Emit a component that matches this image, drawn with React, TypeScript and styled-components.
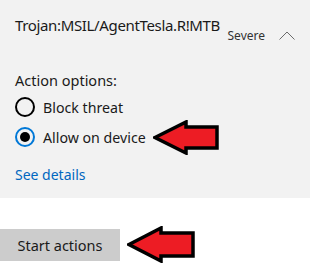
import React from "react";
import styled, { createGlobalStyle } from "styled-components";

const Global = createGlobalStyle`
  html, body { margin: 0; padding: 0; background: #ffffff; }
  body { font-family: "Noto Sans", "Open Sans", sans-serif; color: #000; }
`;

const Page = styled.div`
  width: 310px;
  height: 269px;
  display: flex;
  flex-direction: column;
  background: #ffffff;
  overflow: hidden;
`;

const Panel = styled.section`
  height: 198px;
  box-sizing: border-box;
  background: #f2f2f2;
  padding: 14px 15px 0 15px;
  display: flex;
  flex-direction: column;
`;

const Header = styled.div`
  display: flex;
  align-items: flex-start;
  height: 44px;
`;

const Title = styled.div`
  font-size: 15px;
  line-height: 22px;
  color: #1a1a1a;
  letter-spacing: -0.35px;
`;

const Severity = styled.div`
  margin-left: auto;
  margin-top: 12px;
  font-size: 12px;
  line-height: 20px;
  color: #333;
`;

const Chevron = styled.svg`
  margin-left: 14px;
  margin-top: 17px;
  flex: none;
`;

const Label = styled.div`
  font-size: 14.5px;
  line-height: 20px;
  color: #1a1a1a;
  margin-top: 12px;
`;

const Options = styled.div`
  display: flex;
  flex-direction: column;
  gap: 10px;
  margin-top: 7px;
`;

const Option = styled.label`
  display: flex;
  align-items: center;
  height: 20px;
  font-size: 14.2px;
  color: #1a1a1a;
`;

const Radio = styled.span<{ $checked?: boolean }>`
  width: 20px;
  height: 20px;
  box-sizing: border-box;
  border-radius: 50%;
  border: 2px solid ${(p) => (p.$checked ? "#0078d7" : "#000")};
  display: flex;
  align-items: center;
  justify-content: center;
  margin-right: 8px;
  flex: none;
  &::after {
    content: "";
    width: 10px;
    height: 10px;
    border-radius: 50%;
    background: #000;
    display: ${(p) => (p.$checked ? "block" : "none")};
  }
`;

const Link = styled.a`
  margin-top: 18px;
  font-size: 14px;
  line-height: 20px;
  color: #0067c0;
  text-decoration: none;
`;

const ActionRow = styled.div`
  display: flex;
  align-items: center;
  margin-top: 28px;
`;

const Button = styled.button`
  width: 120px;
  height: 32px;
  border: none;
  background: #cccccc;
  font-family: inherit;
  font-size: 14.5px;
  color: #1a1a1a;
  padding: 0;
`;

const Arrow = styled.svg<{ $gap: number }>`
  margin-left: ${(p) => p.$gap}px;
  flex: none;
`;

const ArrowIcon = ({ w, h, gap }: { w: number; h: number; gap: number }) => {
  const head = Math.round(w * 0.52);
  const shT = Math.round(h * 0.2);
  const shB = h - shT;
  return (
    <Arrow $gap={gap} width={w} height={h} viewBox={`0 0 ${w} ${h}`}>
      <polygon
        points={`2,${h / 2} ${head - 1},2 ${head - 1},${shT} ${w - 2},${shT} ${w - 2},${shB} ${head - 1},${shB} ${head - 1},${h - 2}`}
        fill="#ed1c24"
        stroke="#000"
        strokeWidth={3.5}
        strokeLinejoin="miter"
      />
    </Arrow>
  );
};

export default function App() {
  return (
    <Page>
      <Global />
      <Panel>
        <Header>
          <Title>Trojan:MSIL/AgentTesla.R!MTB</Title>
          <Severity>Severe</Severity>
          <Chevron width="16" height="9" viewBox="0 0 16 9">
            <polyline points="0.5,8.5 8,1 15.5,8.5" fill="none" stroke="#6b6b6b" strokeWidth="1" />
          </Chevron>
        </Header>
        <Label>Action options:</Label>
        <Options>
          <Option>
            <Radio />
            Block threat
          </Option>
          <Option>
            <Radio $checked />
            Allow on device
            <ArrowIcon w={66} h={35} gap={7} />
          </Option>
        </Options>
        <Link href="#">See details</Link>
      </Panel>
      <ActionRow>
        <Button>Start actions</Button>
        <ArrowIcon w={68} h={37} gap={7} />
      </ActionRow>
    </Page>
  );
}
